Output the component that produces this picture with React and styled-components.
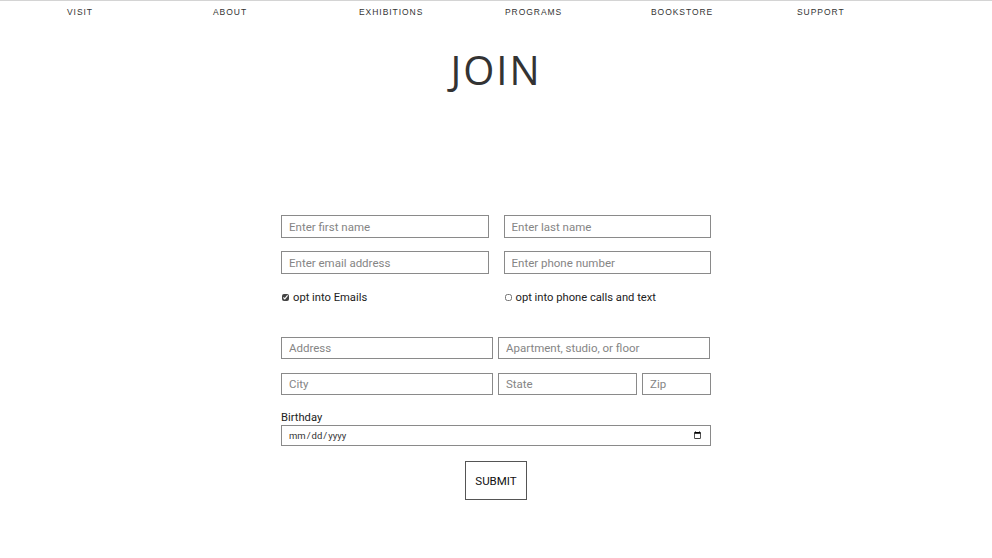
import React from 'react'
import styled, { createGlobalStyle } from 'styled-components'

const Global = createGlobalStyle`
  html, body {
    margin: 0;
    padding: 0;
    background: #fff;
  }
  body {
    font-family: Roboto, "Liberation Sans", sans-serif;
    color: #222;
  }
`

const Page = styled.div`
  border-top: 1px solid #d4d4d4;
  min-height: 557px;
`

const Nav = styled.nav`
  display: grid;
  grid-template-columns: repeat(6, 146px);
  padding-left: 67px;
  height: 22px;
  align-items: center;
`

const NavLink = styled.a`
  font-family: "Liberation Sans", Arial, sans-serif;
  font-size: 8.5px;
  letter-spacing: 0.95px;
  color: #333;
  text-decoration: none;
`

const Title = styled.h1`
  margin: 19px 0 0;
  text-align: center;
  font-family: "Open Sans", sans-serif;
  font-weight: 400;
  font-size: 40px;
  letter-spacing: 2px;
  line-height: 56px;
  color: #333;
`

const Form = styled.form`
  width: 430px;
  margin: 117px auto 0;
  display: flex;
  flex-direction: column;
`

const Row = styled.div`
  display: grid;
  grid-template-columns: ${p => p.$cols};
  column-gap: ${p => p.$gap || 15}px;
  margin-bottom: ${p => p.$mb || 0}px;
`

const Field = styled.input`
  box-sizing: border-box;
  width: 100%;
  height: ${p => p.$h || 23}px;
  border: 1px solid #8a8a8a;
  padding: 0 7px;
  font-family: Roboto, "Liberation Sans", sans-serif;
  font-size: 11.5px;
  color: #333;
  outline: none;
  &::placeholder {
    color: #858585;
  }
`

const CheckLabel = styled.label`
  display: flex;
  align-items: center;
  gap: 4px;
  font-size: 11.2px;
  color: #222;
  height: 14px;
`

const Box = styled.input`
  margin: 0 0 0 1px;
  width: 7px;
  height: 7px;
  accent-color: #444;
`

const Label = styled.label`
  font-size: 11.2px;
  color: #222;
  line-height: 14px;
`

const DateField = styled.input`
  box-sizing: border-box;
  width: 100%;
  height: 21px;
  border: 1px solid #8a8a8a;
  padding: 0 6px;
  font-family: Roboto, "Liberation Sans", sans-serif;
  font-size: 9.5px;
  color: #333;
  outline: none;
`

const Submit = styled.button`
  align-self: center;
  margin-top: 15px;
  width: 62px;
  height: 39px;
  background: #fff;
  border: 1px solid #555;
  font-family: Roboto, "Liberation Sans", sans-serif;
  font-size: 11.5px;
  color: #111;
  padding: 0;
`

const links = ['VISIT', 'ABOUT', 'EXHIBITIONS', 'PROGRAMS', 'BOOKSTORE', 'SUPPORT']

export default function App() {
  return (
    <Page>
      <Global />
      <Nav>
        {links.map(l => (
          <NavLink key={l} href="#">{l}</NavLink>
        ))}
      </Nav>
      <Title>JOIN</Title>
      <Form onSubmit={e => e.preventDefault()}>
        <Row $cols="1fr 1fr" $mb={13}>
          <Field placeholder="Enter first name" />
          <Field placeholder="Enter last name" />
        </Row>
        <Row $cols="1fr 1fr" $mb={16}>
          <Field placeholder="Enter email address" />
          <Field placeholder="Enter phone number" />
        </Row>
        <Row $cols="1fr 1fr" $mb={33}>
          <CheckLabel>
            <Box type="checkbox" defaultChecked />
            opt into Emails
          </CheckLabel>
          <CheckLabel>
            <Box type="checkbox" />
            opt into phone calls and text
          </CheckLabel>
        </Row>
        <Row $cols="212px 212px" $gap={5} $mb={14}>
          <Field $h={22} placeholder="Address" />
          <Field $h={22} placeholder="Apartment, studio, or floor" />
        </Row>
        <Row $cols="212px 139px 1fr" $gap={5} $mb={16}>
          <Field $h={22} placeholder="City" />
          <Field $h={22} placeholder="State" />
          <Field $h={22} placeholder="Zip" />
        </Row>
        <Label htmlFor="bday">Birthday</Label>
        <DateField id="bday" type="date" />
        <Submit type="submit">SUBMIT</Submit>
      </Form>
    </Page>
  )
}
